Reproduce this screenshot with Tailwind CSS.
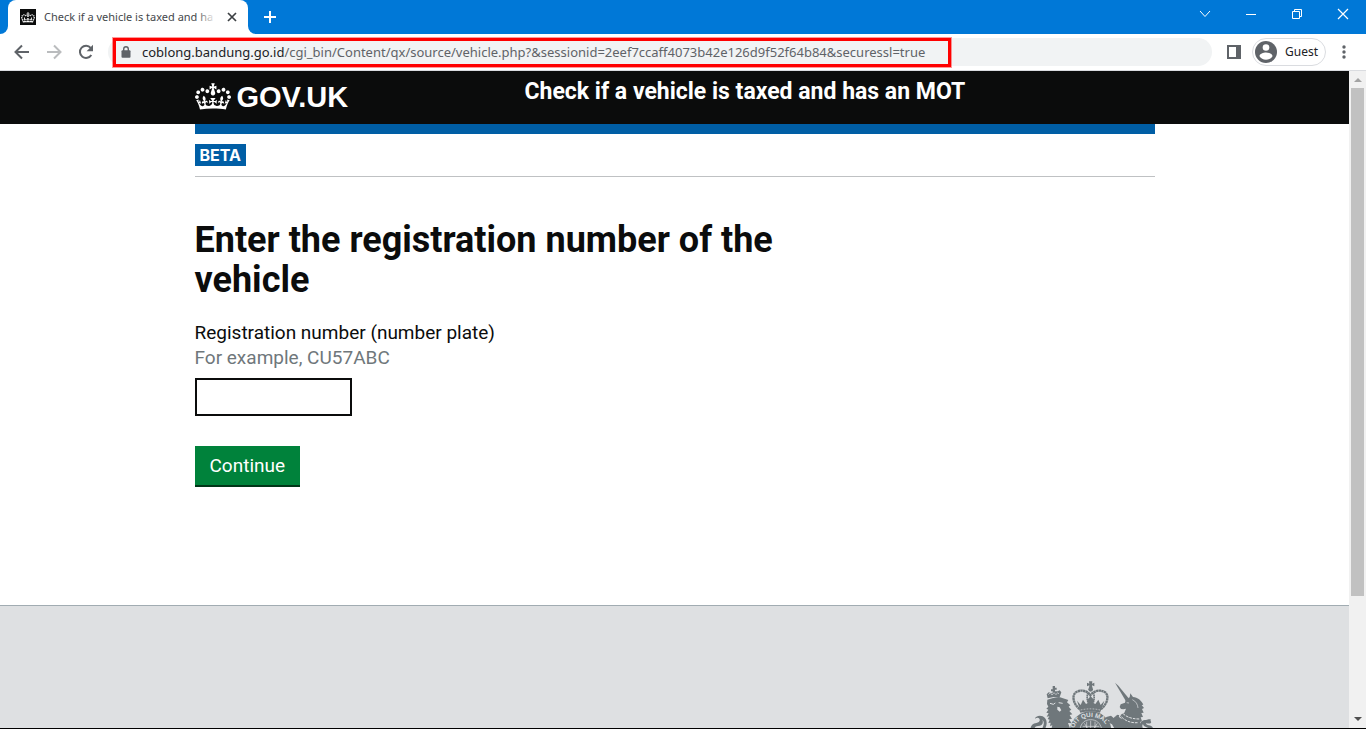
<!DOCTYPE html>
<html lang="en">
<head>
<meta charset="utf-8">
<meta name="viewport" content="width=device-width, initial-scale=1">
<title>Check if a vehicle is taxed and has an MOT</title>
<script src="https://cdn.jsdelivr.net/npm/@tailwindcss/browser@4"></script>
</head>
<body class="flex h-screen flex-col overflow-hidden border-b border-black bg-white font-['Roboto',sans-serif] text-[#0b0c0c]">
<svg class="hidden" aria-hidden="true">
  <symbol id="crown" viewBox="0 0 132 97"><path d="M25 30.2c3.5 1.5 7.7-.2 9.1-3.7 1.5-3.6-.2-7.8-3.9-9.2-3.6-1.4-7.6.3-9.1 3.9-1.4 3.5.3 7.5 3.9 9zM9 39.5c3.6 1.5 7.8-.2 9.2-3.7 1.5-3.6-.2-7.8-3.9-9.1-3.6-1.5-7.6.2-9.1 3.8-1.4 3.5.3 7.5 3.8 9zM4.4 57.2c3.5 1.5 7.7-.2 9.1-3.8 1.5-3.6-.2-7.7-3.9-9.1-3.5-1.5-7.6.3-9.1 3.8-1.4 3.5.3 7.6 3.9 9.1zm38.3-21.4c3.5 1.5 7.7-.2 9.1-3.8 1.5-3.6-.2-7.7-3.9-9.1-3.6-1.5-7.6.3-9.1 3.8-1.3 3.6.4 7.7 3.9 9.1zm64.4-5.6c-3.6 1.5-7.8-.2-9.1-3.7-1.5-3.6.2-7.8 3.8-9.2 3.6-1.4 7.7.3 9.2 3.9 1.3 3.5-.4 7.5-3.9 9zm15.9 9.3c-3.6 1.5-7.7-.2-9.1-3.7-1.5-3.6.2-7.8 3.7-9.1 3.6-1.5 7.7.2 9.2 3.8 1.5 3.5-.3 7.5-3.8 9zm4.7 17.7c-3.6 1.5-7.8-.2-9.2-3.8-1.5-3.6.2-7.7 3.9-9.1 3.6-1.5 7.7.3 9.2 3.8 1.3 3.5-.4 7.6-3.9 9.1zM89.3 35.8c-3.6 1.5-7.8-.2-9.2-3.8-1.4-3.6.2-7.7 3.9-9.1 3.6-1.5 7.7.3 9.2 3.8 1.4 3.6-.3 7.7-3.9 9.1zM69.7 17.7l8.9 4.7V9.3l-8.9 2.8c-.2-.3-.5-.6-.9-.9L72.4 0H59.6l3.5 11.2c-.3.3-.6.5-.9.9l-8.8-2.8v13.1l8.8-4.7c.3.3.6.7.9.9l-5 15.4v.1c-.2.8-.4 1.6-.4 2.4 0 4.1 3.1 7.5 7 8.1h.2c.3 0 .7.1 1 .1.4 0 .7 0 1-.1h.2c4-.6 7.1-4.1 7.1-8.1 0-.8-.1-1.7-.4-2.4V34l-5.1-15.4c.4-.2.7-.6 1-.9zM66 92.8c16.900 0 32.800 1.100 47.100 3.200 4-16.900 8.900-26.700 14-33.500l-9.600-3.400c1 4.900 1.100 7.200 0 10.200-1.500-1.400-3-4.300-4.200-8.700L108.600 76c2.800-2 5-3.200 7.500-3.300-4.400 9.400-10 11.900-13.600 11.200-4.300-.8-6.300-4.600-5.600-7.900 1-4.700 5.700-5.900 8-.5 4.300-8.700-3-11.400-7.600-8.800 7.100-7.200 7.900-13.500 2.100-21.100-8 6.100-8.100 12.300-4.500 20.800-4.700-5.400-12.100-2.500-9.500 6.200 3.400-5.200 7.900-2 7.200 3.100-.6 4.300-6.400 7.800-13.500 7.200-10.300-.9-10.900-8-11.200-13.800 2.500-.5 7.100 1.800 11 7.300L80.200 60c-4.100 4.400-8 5.300-12.300 5.400 1.400-4.400 8-11.600 8-11.600H55.500s6.400 7.200 7.900 11.600c-4.200-.1-8-1-12.300-5.400l1.400 16.400c3.900-5.500 8.500-7.700 10.900-7.300-.3 5.800-.9 12.800-11.100 13.800-7.200.6-12.900-2.900-13.500-7.200-.7-5 3.800-8.300 7.100-3.100 2.700-8.700-4.600-11.600-9.400-6.200 3.700-8.500 3.600-14.700-4.600-20.800-5.800 7.600-5 13.900 2.200 21.100-4.700-2.600-11.900.1-7.700 8.800 2.300-5.500 7.100-4.200 8.100.5.7 3.300-1.300 7.100-5.700 7.900-3.500.7-9-1.800-13.500-11.200 2.500.1 4.700 1.300 7.500 3.300l-4.700-15.400c-1.200 4.400-2.700 7.200-4.300 8.700-1.100-3-.9-5.300 0-10.200l-9.500 3.400c5 6.900 9.900 16.700 14 33.500 14.800-2.100 30.800-3.200 47.700-3.200z"/></symbol>
</svg>

<!-- Browser window -->
<div class="flex shrink-0 flex-col font-['Noto_Sans',sans-serif]">
  <div class="flex h-[34px] items-stretch justify-between bg-[#0078d7]">
    <div class="flex">
      <div class="w-2 bg-white"><div class="h-full rounded-br-lg bg-[#0078d7]"></div></div>
      <div class="flex w-60 items-center rounded-t-lg bg-white pr-2 pl-3">
        <span class="flex size-4 shrink-0 items-center justify-center bg-[#0b0c0c]"><svg class="h-[11px] w-[14px] fill-white"><use href="#crown"/></svg></span>
        <span class="relative ml-2 w-[174px] overflow-hidden text-[11px] whitespace-nowrap text-[#45484c]">Check if a vehicle is taxed and ha<span class="absolute inset-y-0 right-0 w-5 bg-linear-to-r from-white/0 to-white"></span></span>
        <button class="ml-2 flex h-4 w-4 shrink-0 items-center justify-center" aria-label="Close tab"><svg class="size-[10px]" viewBox="0 0 10 10" fill="none" stroke="#3c4043" stroke-width="1.7"><path d="M1 1l8 8M9 1l-8 8"/></svg></button>
      </div>
      <div class="w-2 bg-white"><div class="h-full rounded-bl-lg bg-[#0078d7]"></div></div>
      <button class="ml-2 flex w-[12px] items-center justify-center" aria-label="New tab"><svg class="size-3" viewBox="0 0 12 12" stroke="#fff" stroke-width="2"><path d="M6 0v12M0 6h12"/></svg></button>
    </div>
    <div class="flex h-7 items-center text-white">
      <button class="flex w-[46px] justify-center" aria-label="Search tabs"><svg class="size-3" viewBox="0 0 12 12" fill="none" stroke="#fff"><path d="M1 3l5 5.500 5-5.500"/></svg></button>
      <button class="flex w-[46px] justify-center" aria-label="Minimise"><svg class="size-3" viewBox="0 0 12 12" stroke="#fff"><path d="M1 6.500h10"/></svg></button>
      <button class="flex w-[46px] justify-center" aria-label="Restore"><svg class="size-3" viewBox="0 0 12 12" fill="none" stroke="#fff"><path d="M1.500 3.500h7v7h-7zM3.500 3.500v-2h7v7h-2"/></svg></button>
      <button class="flex w-[46px] justify-center" aria-label="Close"><svg class="size-3" viewBox="0 0 12 12" stroke="#fff" stroke-width="1.200"><path d="M1 1l10 10M11 1L1 11"/></svg></button>
    </div>
  </div>
  <div class="flex h-[37px] items-center border-b border-[#dadce0] bg-white pl-3">
    <button class="flex w-5 justify-center" aria-label="Back"><svg class="size-5" viewBox="0 0 20 20" fill="none" stroke="#5f6368" stroke-width="2"><path d="M17 10H4M10 3.500L3.500 10l6.500 6.500"/></svg></button>
    <button class="ml-3 flex w-5 justify-center" aria-label="Forward"><svg class="size-5" viewBox="0 0 20 20" fill="none" stroke="#babcbe" stroke-width="2"><path d="M3 10h13M10 3.500l6.500 6.500-6.500 6.500"/></svg></button>
    <button class="ml-3 flex w-5 justify-center" aria-label="Reload"><svg class="size-5" viewBox="0 0 20 20"><path d="M15.300 13a6.100 6.100 0 1 1-.6-7.100" fill="none" stroke="#5f6368" stroke-width="2"/><path d="M17 2.800v6.400h-6.400z" fill="#5f6368"/></svg></button>
    <div class="relative ml-3 flex h-7 flex-1 items-center rounded-full bg-[#f1f3f4] pl-[13px]">
      <svg class="h-3 w-[10px] shrink-0" viewBox="0 0 10 12"><path d="M2.700 5V3a2.300 2.300 0 0 1 4.600 0v2" fill="none" stroke="#5f6368" stroke-width="1.400"/><rect x=".5" y="4.300" width="9" height="7.400" rx="1" fill="#5f6368"/></svg>
      <span class="ml-[11px] pt-[2px] text-[13px] whitespace-nowrap text-[#5f6368]"><span class="text-[#202124]">coblong.bandung.go.id</span>/cgi_bin/Content/qx/source/vehicle.php?&amp;sessionid=2eef7ccaff4073b42e126d9f52f64b84&amp;securessl=true</span>
      <div class="absolute top-0 left-[5px] h-[29px] w-[838px] border-3 border-[#ff0000] ring-1 ring-[#ff0000]/40"></div>
    </div>
    <button class="ml-[15px] flex" aria-label="Side panel"><svg class="size-[14px]" viewBox="0 0 14 14"><path fill="#5f6368" fill-rule="evenodd" d="M0 0h14v14H0zM2 2v10h7V2z"/></svg></button>
    <button class="ml-[11px] flex h-7 w-[74px] items-center gap-2 rounded-full border border-[#dadce0] pl-[2px] text-xs text-[#202124]"><svg class="size-[22px]" viewBox="0 0 22 22"><circle cx="11" cy="11" r="11" fill="#5f6368"/><circle cx="11" cy="6.500" r="3.300" fill="#fff"/><path d="M4.500 15.300c0-2.700 4-3.800 6.500-3.800s6.500 1.100 6.500 3.800c-1.400 2.200-3.700 3.500-6.500 3.500s-5.100-1.300-6.500-3.500z" fill="#fff"/></svg>Guest</button>
    <button class="ml-3 flex w-7 pl-1" aria-label="Menu"><svg class="h-[14px] w-1" viewBox="0 0 4 14" fill="#5f6368"><circle cx="2" cy="2" r="1.700"/><circle cx="2" cy="7" r="1.700"/><circle cx="2" cy="12" r="1.700"/></svg></button>
  </div>
</div>

<!-- Page viewport -->
<div class="flex min-h-0 flex-1">
  <div class="flex min-w-0 flex-1 flex-col overflow-hidden">
    <header class="h-[53px] shrink-0 bg-[#0b0c0c] text-white">
      <div class="mx-auto flex max-w-[960px]">
        <a href="#" class="flex w-[330px] items-center gap-[6px] pt-2 font-['Liberation_Sans',sans-serif] text-[29px] leading-9 font-bold"><svg class="mb-[2px] h-[27px] w-9 fill-white"><use href="#crown"/></svg>GOV.UK</a>
        <a href="#" class="pt-[6px] text-[23px] leading-[30px] font-bold">Check if a vehicle is taxed and has an MOT</a>
      </div>
    </header>
    <main class="mx-auto w-full max-w-[960px] flex-1">
      <div class="h-[10px] bg-[#005ea5]"></div>
      <div class="flex border-b border-[#bfc1c3] py-[10px]"><strong class="bg-[#005ea5] px-[5px] font-['Inter',sans-serif] text-base leading-[22px] font-bold text-white">BETA</strong></div>
      <h1 class="mt-[43px] max-w-[640px] text-4xl leading-10 font-bold">Enter the registration number of the vehicle</h1>
      <form class="mt-5">
        <label for="vrm" class="block text-[19px] leading-[25px]">Registration number (number plate)<span class="block text-[#6f777b]">For example, CU57ABC</span></label>
        <input id="vrm" type="text" class="mt-2 block h-[38px] w-[157px] border-2 border-[#0b0c0c] px-1 text-[19px] outline-none">
        <button type="button" class="mt-[30px] block h-[41px] border-b-2 border-[#003618] bg-[#00823b] px-[15px] pt-[2px] text-[19px] text-white">Continue</button>
      </form>
    </main>
    <footer class="h-[123px] shrink-0 overflow-hidden border-t border-[#a1acb2] bg-[#dee0e2]">
      <div class="mx-auto flex max-w-[960px] justify-end pt-[74px]">
        <!-- Royal coat of arms -->
        <svg class="h-[49px] w-[126px]" viewBox="57 28 378 147" fill="#6f777b" role="img" aria-label="Royal coat of arms">
          <path d="M128 46h7v5h5v6h-5v5h8l6-3 5 6-6 17-17-3-18 4-3-12 6-6 7 2 5-1v-4h-5v-6h5z"/>
          <path d="M115 72l6-6 5 7 6-7 6 6 5-6 4 4" fill="none" stroke="#dee0e2" stroke-width="2"/>
          <path d="M112 87l17-5 21-2 9 3 16 5-4 7 10 9-5 4 8 9-6 4 9 10-8 2 7 12-9 1 8 12-11-1 7 18h-57l3-11-7 2 2-10-7 1 4-10-6-2 5-8-8 1 6-10-7-2 6-9-6-3 6-6-4-8z"/>
          <path d="M120 98l10 3 6-4m10-1l12 2" fill="none" stroke="#dee0e2" stroke-width="3"/>
          <path d="M142 108l7 2 5 9-5 4-7-6z" fill="#dee0e2"/>
          <path d="M61 175c2-11 7-17 18-18 8-1 13-7 9-13-3-4-8-3-13 0 0-7 14-12 23-7 14 8 15 22 7 38h-9c7-14 7-23 1-28 5 12-2 19-13 19-7 0-10 4-11 9z"/>
          <path d="M237 32h10l-1 7 7-3v11l-7-3 1 8h-10l1-8-7 3V36l7 3z"/>
          <circle cx="242" cy="56" r="7"/>
          <g fill="none" stroke="#6f777b">
            <path d="M209 115c-21-16-24-43-10-51 17-9 34-2 42 10 8-12 27-19 43-10 14 8 10 35-11 51" stroke-width="7" stroke-dasharray="7 1"/>
            <path d="M234 66c-4 12-3 21 1 32m15-32c4 12 3 21-1 32" stroke-width="5" stroke-dasharray="5 1"/>
          </g>
          <path d="M201 90l11 13 7-16 9 13 7-4-4-8 11-11 11 11-4 8 7 4 9-13 7 16 11-13-9 28c-22-5-44-5-64 0z"/>
          <path d="M207 116c22-6 46-6 67 0l-4 10c-20-5-40-5-59 0z"/>
          <path d="M212 118q30-7 58 0" stroke="#dee0e2" stroke-width="2" stroke-dasharray="5 4" fill="none"/>
          <path d="M180 175c3-29 30-53 62-53s59 24 62 53z"/>
          <path id="motto" d="M192 175c4-21 24-36 50-36s46 15 52 36" fill="none"/>
          <path d="M210 175c3-18 15-28 32-28s29 10 33 28" fill="none" stroke="#dee0e2" stroke-width="2"/>
          <path d="M242 150v25m-12-22v22m25-22v22m-37-8h50M223 158l11 17m28-17l-11 17" fill="none" stroke="#dee0e2" stroke-width="2"/>
          <text font-family="Liberation Sans,sans-serif" font-size="19" font-weight="700" fill="#dee0e2"><textPath href="#motto" startOffset="2">OIT QUI MAL</textPath></text>
          <path d="M315 36l10 9 31 38-9 7z"/>
          <path d="M347 87l12-7 2-12 8 11c14 1 25 10 31 23l-5 1 7 9-6 3 5 11-7 1 5 12-7 1 4 12-6 2 5 21h-40l-12-19-14-12 3-12 11-6 5-12-8 2-7-1-4-6 3-8 13-5z"/>
          <path d="M350 96l7 1m10-10c11 5 16 14 17 25" stroke="#dee0e2" stroke-width="2" fill="none"/>
          <path d="M332 121c12 16 29 24 57 24m-61-14c13 18 32 27 57 25" fill="none" stroke="#dee0e2" stroke-width="3" stroke-dasharray="8 3"/>
          <path d="M289 139l14-4 8 7 9-10 11 2 1 8 13 11 11 22h-42l-8-14-14-7 8-3-13-7z"/>
          <path d="M316 137l6-9 8 1-2 10 7 4" fill="none" stroke="#dee0e2" stroke-width="3"/>
          <path d="M392 175c-7-17 2-27 16-27 6 0 8-4 15-1-4 4 2 5 0 9-5 6-11 0-15 2 0 8 19 3 22 17h-13c-5-7-17-6-18-15-4 6-2 9 1 15z"/>
        </svg>
      </div>
    </footer>
  </div>
  <!-- Scrollbar -->
  <div class="flex w-[17px] shrink-0 flex-col items-center bg-[#f1f1f1]">
    <svg class="h-[17px] w-[17px] shrink-0" viewBox="0 0 17 17" fill="#a3a3a3"><path d="M5 11h8L9 7z"/></svg>
    <div class="w-[13px] grow-[508] basis-0 bg-[#c1c1c1]"></div>
    <div class="grow-[115] basis-0"></div>
    <svg class="h-[17px] w-[17px] shrink-0" viewBox="0 0 17 17" fill="#505050"><path d="M5 6h8l-4 4z"/></svg>
  </div>
</div>
</body>
</html>
